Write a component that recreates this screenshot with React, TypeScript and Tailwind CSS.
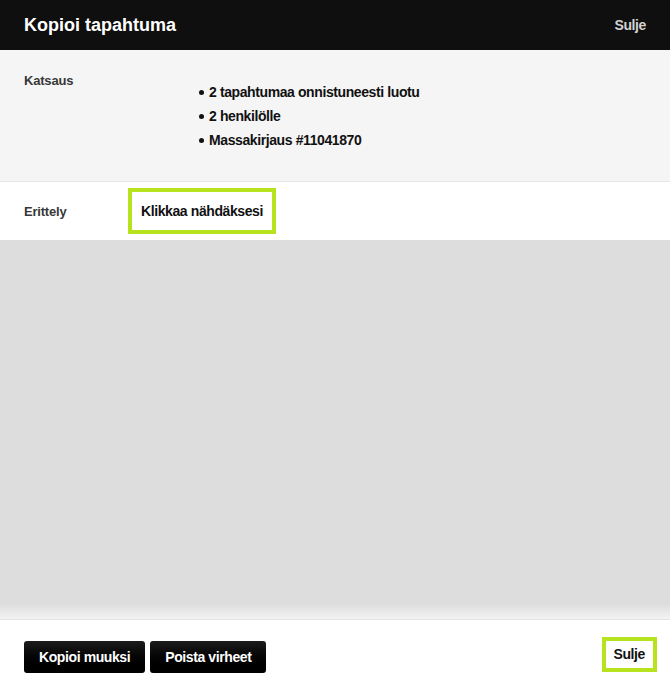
import React from "react";

export default function App() {
  const font = { fontFamily: '"Liberation Sans", Arial, sans-serif' };
  const items = ["2 tapahtumaa onnistuneesti luotu", "2 henkilölle", "Massakirjaus #11041870"];
  return (
    <div className="flex h-[678px] w-full flex-col overflow-hidden bg-white" style={font}>
      <header className="flex h-[50px] shrink-0 items-center justify-between bg-[#0f0f0f] px-6">
        <h1 className="text-[18px] font-bold leading-none text-white">Kopioi tapahtuma</h1>
        <button className="text-[14px] font-bold leading-none tracking-[-0.4px] text-[#d2d2d2]">Sulje</button>
      </header>

      <section className="flex h-[132px] shrink-0 border-b border-[#e6e6e6] bg-[#f5f5f5] px-6 pt-[21px]">
        <div className="w-[175px] text-[13px] font-bold leading-5 tracking-[-0.2px] text-[#383838]">Katsaus</div>
        <ul className="mt-[9px] flex flex-col">
          {items.map((t) => (
            <li key={t} className="flex h-6 items-center gap-[5px] text-[14px] font-bold tracking-[-0.4px] text-[#111]">
              <span className="h-[5px] w-[5px] rounded-full bg-[#111]" />
              <span>{t}</span>
            </li>
          ))}
        </ul>
      </section>

      <section className="flex h-[58px] shrink-0 items-center bg-white px-6">
        <div className="mt-[1px] w-[104px] text-[13px] font-bold tracking-[-0.2px] text-[#383838]">Erittely</div>
        <button className="border-[4px] border-[#b6e31e] px-[9px] py-[9px] text-[14px] font-bold leading-5 tracking-[-0.4px] text-[#111]">
          Klikkaa nähdäksesi
        </button>
      </section>

      <div className="flex flex-1 flex-col bg-[#dddddd]">
        <div className="flex-1" />
        <div className="h-[15px] bg-gradient-to-b from-[#dddddd] to-[#f3f3f3]" />
      </div>

      <footer className="flex h-[59px] shrink-0 items-start justify-between border-t border-[#e4e4e4] bg-white pl-6 pr-[13px]">
        <div className="mt-[21px] flex gap-[5px]">
          <button className="h-8 rounded-[3px] bg-gradient-to-b from-[#1c1c1c] to-black px-[15px] text-[14px] font-bold tracking-[-0.4px] text-white">
            Kopioi muuksi
          </button>
          <button className="h-8 rounded-[3px] bg-gradient-to-b from-[#1c1c1c] to-black px-[15px] text-[14px] font-bold tracking-[-0.4px] text-white">
            Poista virheet
          </button>
        </div>
        <button className="mt-[17px] h-[35px] border-[4px] border-[#b6e31e] px-[8px] text-[14px] font-bold tracking-[-0.4px] text-[#111]">
          Sulje
        </button>
      </footer>
    </div>
  );
}
